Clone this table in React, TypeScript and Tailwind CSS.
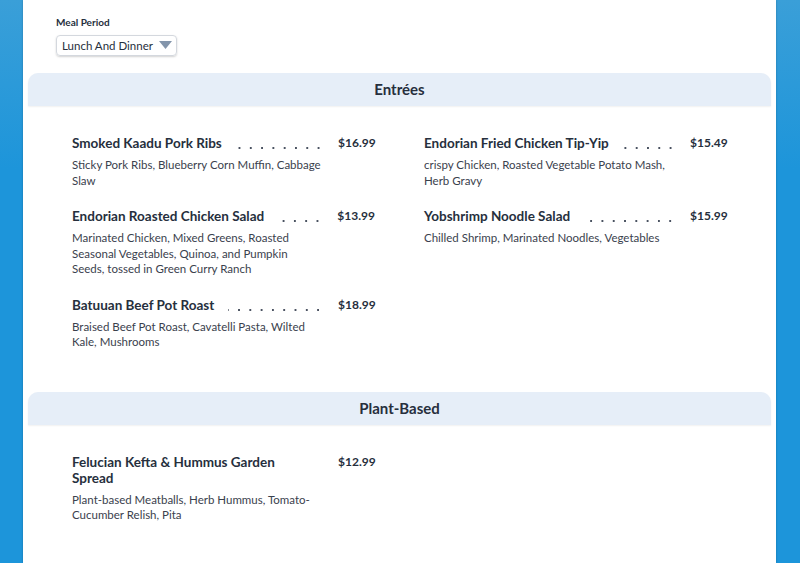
import React from "react";

type Item = { name: string; price: string; desc: string; descW?: string };

const entrees: Item[][] = [
  [
    { name: "Smoked Kaadu Pork Ribs", price: "$16.99", desc: "Sticky Pork Ribs, Blueberry Corn Muffin, Cabbage Slaw" },
    { name: "Endorian Roasted Chicken Salad", price: "$13.99", desc: "Marinated Chicken, Mixed Greens, Roasted Seasonal Vegetables, Quinoa, and Pumpkin Seeds, tossed in Green Curry Ranch", descW: "w-[246px]" },
    { name: "Batuuan Beef Pot Roast", price: "$18.99", desc: "Braised Beef Pot Roast, Cavatelli Pasta, Wilted Kale, Mushrooms" },
  ],
  [
    { name: "Endorian Fried Chicken Tip-Yip", price: "$15.49", desc: "crispy Chicken, Roasted Vegetable Potato Mash, Herb Gravy" },
    { name: "Yobshrimp Noodle Salad", price: "$15.99", desc: "Chilled Shrimp, Marinated Noodles, Vegetables" },
  ],
];

const plant: Item[][] = [
  [
    { name: "Felucian Kefta & Hummus Garden Spread", price: "$12.99", desc: "Plant-based Meatballs, Herb Hummus, Tomato-Cucumber Relish, Pita" },
  ],
  [],
];

function MenuItem({ item }: { item: Item }) {
  return (
    <div className="flex gap-[18px]">
      <div className="w-[248px] flex flex-col">
        <div className="flex items-start">
          <span className="text-[13.5px] leading-[16px] font-bold text-[#262f3d]">{item.name}</span>
          <span className="flex-1 ml-[14px] h-[16px] bg-[radial-gradient(circle,#4a5261_0.9px,transparent_1.3px)] bg-[length:11.3px_4px] bg-repeat-x bg-[position:right_-4px_top_11px]" />
        </div>
        <p className={`mt-[6px] ${item.descW ?? "w-[254px]"} text-[11.5px] leading-[15.5px] text-[#3a414d]`}>{item.desc}</p>
      </div>
      <div className="text-[12px] leading-[16px] font-bold text-[#262f3d]">{item.price}</div>
    </div>
  );
}

function Section({ title, cols, pb }: { title: string; cols: Item[][]; pb: string }) {
  return (
    <div>
      <div className="mx-[5px] h-[33px] rounded-t-[10px] bg-[#e6eef8] shadow-[0_1px_2px_rgba(0,0,0,0.06)] flex items-center justify-center">
        <span className="text-[15px] font-bold text-[#262f3d]">{title}</span>
      </div>
      <div className={`pl-[49px] pt-[29px] ${pb} grid grid-cols-[303px_303px] gap-x-[49px]`}>
        {cols.map((col, i) => (
          <div key={i} className="flex flex-col gap-[20px]">
            {col.map((it) => (
              <MenuItem key={it.name} item={it} />
            ))}
          </div>
        ))}
      </div>
    </div>
  );
}

export default function App() {
  return (
    <div
      className="w-[800px] h-[563px] overflow-hidden bg-[linear-gradient(#3a9fd8,#1d95da_30%,#1d95da)] flex"
      style={{ fontFamily: "Lato, 'Noto Sans', sans-serif" }}
    >
      <div className="ml-[23px] w-[753px] h-full bg-white shadow-[0_0_2px_rgba(0,0,0,0.25)]">
        <div className="pl-[33px] pt-[16px] pb-[17px]">
          <div className="text-[10px] font-bold text-[#262f3d] leading-[12px]">Meal Period</div>
          <div className="mt-[7px] w-[121px] h-[21px] rounded-[4px] border border-[#d4d8de] shadow-[0_1px_2px_rgba(0,0,0,0.18)] flex items-center pl-[5px] gap-[6px]">
            <span className="text-[11.5px] text-[#262f3d]">Lunch And Dinner</span>
            <svg width="13" height="9" viewBox="0 0 13 9">
              <path d="M0 0 L13 0 L6.5 8 Z" fill="#8395ab" />
            </svg>
          </div>
        </div>
        <Section title="Entrées" cols={entrees} pb="pb-[42px]" />
        <Section title="Plant-Based" cols={plant} pb="pb-[40px]" />
      </div>
    </div>
  );
}
